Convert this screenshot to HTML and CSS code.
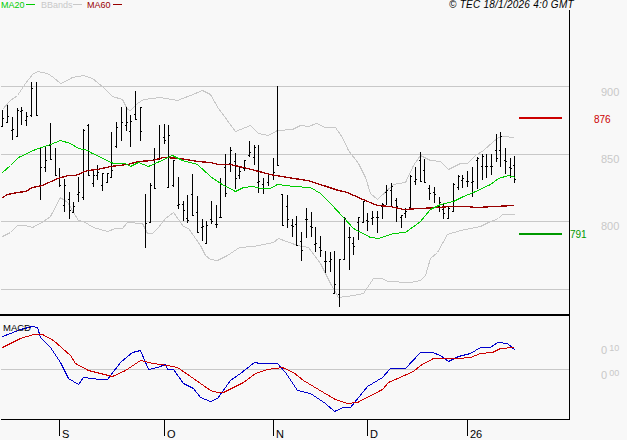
FILE: index.html
```html
<!DOCTYPE html>
<html lang="en">
<head>
<meta charset="utf-8">
<title>Chart</title>
<link rel="stylesheet" href="styles.css">
</head>
<body>
<svg class="chart" width="627" height="440" viewBox="0 0 627 440">
  <g class="px" transform="translate(0.5 0.5)">
    <path class="grid" d="M0 86H569M0 154H569M0 221H569M0 289H569M0 369H569"/>
    <path class="axis" d="M569 9V419M0 419H569M59 419V435M164 419V435M273 419V435M367 419V435M467 419V435"/>
    <path class="legend-green" d="M25 4H34"/>
    <path class="legend-gray" d="M72 4H81"/>
    <path class="legend-red" d="M112 4H121"/>
    <polyline class="band" points="2,109 10,100 17,95 25,83 32,74 37,71 47,73 53,77 60,83 65,81 72,77 83,75 92,78 103,87 112,96 122,99 127,109 130,110 137,103 143,99 160,97 177,100 190,95 202,90 210,94 218,108 235,131 250,125 258,133 268,135 277,130 292,129 300,125 308,126 316,123 325,127 335,127 342,137 348,150 358,163 365,177 370,193 377,199 393,184 405,182 413,165 420,155 430,160 440,161 448,169 460,163 467,163 475,155 483,150 492,142 498,137 503,136 514,137"/>
    <polyline class="band" points="2,236 10,232 17,225 25,225 32,227 43,221 50,216 60,197 67,202 78,220 83,221 93,227 107,231 115,228 122,228 127,222 142,223 147,233 152,233 158,227 165,218 173,212 183,226 188,228 200,245 205,255 210,259 217,260 227,255 239,247 253,246 273,242 278,238 297,245 308,247 320,263 330,283 338,297 353,295 363,293 373,278 382,278 387,281 410,282 420,280 425,275 430,258 437,252 447,234 460,230 480,226 488,222 498,218 502,214 514,214"/>
    <path class="bars" d="M2 110V126M2 126h-.6M2 118h1M7 105V122M7 122h-.6M7 116h1M12 117V139M12 130h-.6M12 129h1M17 108V136M17 136h-.6M17 110h1M21 107V124M21 111h-.6M21 110h1M26 112V125M26 120h-.6M26 116h1M31 82V116M31 115h-.6M31 88h1M36 82V115M36 115h1M40 148V199M40 167h1M45 147V171M45 167h-.6M45 160h1M50 123V158M50 145h-.6M50 159h1M55 148V174M55 175h1M59 168V186M59 178h-.6M59 185h1M64 179V211M64 205h-.6M64 185h1M69 192V218M69 199h-.6M69 210h1M73 202V212M73 212h-.6M73 206h1M78 177V201M78 194h-.6M78 192h1M83 129V199M83 197h-.6M83 130h1M88 124V174M88 125h-.6M88 175h1M93 169V186M93 183h-.6M93 175h1M97 165V179M97 175h-.6M97 172h1M102 173V190M102 185h-.6M102 173h1M107 173V182M107 182h-.6M107 173h1M111 132V176M111 177h-.6M111 170h1M116 122V147M116 146h-.6M116 127h1M121 107V140M121 122h1M126 107V130M126 125h-.6M126 122h1M130 115V146M130 131h-.6M130 121h1M135 91V119M135 114h-.6M135 119h1M140 107V140M140 107h1M140 131h1M145 194V247M145 223h1M150 183V221M150 222h-.6M150 185h1M154 148V187M154 159h-.6M154 188h1M159 125V157M159 159h-.6M159 158h1M164 124V143M164 137h-.6M164 140h1M168 125V186M168 135h1M168 187h-.6M173 160V186M173 185h-.6M173 160h1M178 177V208M178 205h-.6M178 204h1M183 201V220M183 204h-.6M183 210h1M187 195V222M187 218h-.6M187 220h1M192 174V214M192 194h-.6M192 215h1M197 196V232M197 212h-.6M197 232h1M202 219V240M202 227h-.6M202 226h1M206 221V242M206 243h-.6M206 225h1M211 201V223M211 219h-.6M211 221h1M216 205V227M216 224h-.6M216 224h1M220 178V217M220 217h-.6M220 217h1M225 154V196M225 167h-.6M225 193h1M230 147V171M230 163h-.6M230 150h1M235 153V188M235 161h-.6M235 178h1M239 167V178M239 175h-.6M239 171h1M244 160V170M244 168h-.6M244 160h1M249 141V156M249 155h-.6M249 152h1M254 145V164M254 157h-.6M254 147h1M258 145V192M258 182h-.6M258 181h1M263 178V193M263 184h-.6M263 188h1M268 173V185M268 182h-.6M268 174h1M273 158V179M273 175h-.6M273 172h1M277 86V164M277 165h1M282 194V224M282 194h-.6M282 225h1M287 195V227M287 206h-.6M287 219h1M292 219V236M292 225h-.6M292 226h1M296 216V244M296 224h-.6M296 245h1M301 232V260M301 241h-.6M301 250h1M306 208V237M306 219h-.6M306 219h1M311 212V236M311 226h-.6M311 227h1M315 227V251M315 244h-.6M315 243h1M320 236V256M320 247h-.6M320 250h1M325 251V272M325 261h-.6M325 261h1M330 252V271M330 261h-.6M330 259h1M334 251V292M334 293h-.6M334 284h1M339 259V306M339 294h-.6M339 259h1M344 217V258M344 259h-.6M344 218h1M349 227V269M349 237h-.6M349 237h1M353 237V254M353 243h-.6M353 246h1M358 217V239M358 222h-.6M358 217h1M363 201V221M363 222h-.6M363 201h1M367 213V230M367 220h-.6M367 221h1M372 211V224M372 218h-.6M372 217h1M377 211V232M377 217h-.6M377 217h1M382 203V218M382 206h-.6M382 204h1M386 185V204M386 192h-.6M386 190h1M391 183V206M391 190h-.6M391 186h1M396 198V221M396 200h-.6M396 206h1M401 215V227M401 217h-.6M401 215h1M405 208V217M405 213h-.6M405 211h1M410 175V208M410 207h-.6M410 176h1M415 167V184M415 181h-.6M415 179h1M420 152V180M420 160h-.6M420 181h1M424 159V182M424 170h-.6M424 182h1M429 185V199M429 188h-.6M429 193h1M434 187V202M434 192h-.6M434 194h1M439 197V211M439 206h-.6M439 202h1M443 203V218M443 209h-.6M443 213h1M448 207V218M448 218h-.6M448 208h1M453 183V211M453 211h-.6M453 184h1M458 175V189M458 187h-.6M458 176h1M462 175V187M462 180h-.6M462 178h1M467 171V186M467 181h-.6M467 181h1M472 167V196M472 182h-.6M472 181h1M477 157V188M477 160h-.6M477 158h1M482 154V179M482 166h-.6M482 156h1M486 154V177M486 166h-.6M486 166h1M491 154V174M491 166h-.6M491 166h1M496 134V161M496 150h-.6M496 158h1M500 132V166M500 150h-.6M500 136h1M505 148V173M505 160h-.6M505 161h1M510 158V177M510 167h-.6M510 168h1M514 156V182M514 165h-.6M514 179h1"/>
    <polyline class="ma60" points="2,197 7,194 17,192 25,191 32,187 42,185 57,178 68,175 75,175 87,170 97,169 110,166 127,164 138,161 152,160 163,157 180,158 197,161 210,162 218,164 230,164 247,168 270,174 287,177 307,180 323,185 338,190 347,192 360,198 377,205 390,206 403,209 420,208 437,207 450,206 465,206 477,207 493,206 514,205"/>
    <polyline class="ma20" points="2,172 10,165 18,157 33,150 35,149 50,144 60,140 70,143 78,148 88,150 90,152 113,163 125,163 130,166 138,162 148,166 157,162 172,155 182,160 197,164 210,176 220,183 235,191 243,187 253,186 260,188 270,188 277,184 293,186 310,187 320,193 330,203 343,217 353,228 370,237 378,238 393,233 405,232 420,221 430,209 440,204 453,201 463,196 473,192 490,184 498,178 508,175 515,177"/>
    <polyline class="macd-blue" points="2,336 10,333 20,329 32,326 37,327 40,337 50,347 60,362 68,378 78,384 83,377 100,379 107,379 120,362 132,352 140,350 148,369 157,367 165,364 167,369 173,369 183,383 193,388 200,397 210,401 217,398 230,380 240,373 254,362 260,363 277,363 285,372 297,390 310,393 325,403 334,411 343,407 350,407 367,386 382,377 390,368 405,368 420,352 432,352 440,355 448,361 458,356 470,353 480,347 490,347 497,342 507,343 515,350"/>
    <polyline class="macd-red" points="2,347 20,338 33,334 42,334 53,340 70,355 75,363 88,370 100,373 112,376 125,370 140,360 153,363 167,365 177,367 193,378 210,390 217,392 223,392 243,382 255,373 267,369 282,367 293,372 303,380 323,392 335,399 347,403 357,402 382,389 388,382 413,371 420,365 433,358 458,358 470,357 480,353 492,352 500,348 514,347"/>
  </g>
  <g class="px">
    <path class="rule" d="M0 315H570"/>
    <path class="target-red" d="M519 118H562"/>
    <path class="target-green" d="M519 234H562"/>
  </g>
  <text class="t small c-green" x="1" y="8">MA20</text>
  <text class="t small c-gray" x="41" y="8">BBands</text>
  <text class="t small c-dark" x="87" y="8">MA60</text>
  <text class="t stamp" x="449" y="8">© TEC 18/1/2026 4:0 GMT</text>
  <text class="t big c-gray" x="601" y="95.5">900</text>
  <text class="t big c-gray" x="601" y="163">850</text>
  <text class="t big c-gray" x="601" y="230">800</text>
  <text class="t c-red" x="594" y="123">876</text>
  <text class="t c-lime" x="570" y="238">791</text>
  <text class="t big c-gray" x="601" y="354">0<tspan class="sup" dx="2" dy="-3">10</tspan></text>
  <text class="t big c-gray" x="601" y="379">0<tspan class="sup" dx="2" dy="-3">00</tspan></text>
  <text class="t macd-label" x="3" y="331">MACD</text>
  <text class="t big" x="62" y="438">S</text>
  <text class="t big" x="167" y="438">O</text>
  <text class="t big" x="276" y="438">N</text>
  <text class="t big" x="370" y="438">D</text>
  <text class="t big" x="470" y="438">26</text>
</svg>
</body>
</html>
```

FILE: styles.css
```css
html, body { margin: 0; padding: 0; background: #f8f8f8; }
.chart { display: block; }
.px { shape-rendering: crispEdges; }
.px path, .px polyline { fill: none; stroke-width: 1; }
.grid { stroke: #c8c8c8; }
.axis { stroke: #000; }
.px .rule { stroke: #000; stroke-width: 2; }
.px .bars { stroke: #000; stroke-linecap: square; }
.band { stroke: #c8c8c8; }
.ma20, .legend-green { stroke: #00cc00; }
.px .ma60 { stroke: #990000; stroke-width: 1.3; }
.legend-red { stroke: #990000; }
.legend-gray { stroke: #c8c8c8; }
.macd-blue { stroke: #0000cc; }
.macd-red { stroke: #cc0000; }
.px .target-red { stroke: #cc0000; stroke-width: 2; }
.px .target-green { stroke: #009900; stroke-width: 2; }
.t { font-family: "Liberation Sans", Arial, sans-serif; font-size: 10px; fill: #000; }
.small { font-size: 9px; }
.big { font-size: 11px; }
.sup { font-size: 9px; }
.macd-label { font-size: 9.5px; }
.stamp { font-style: italic; letter-spacing: 0.25px; }
.c-green { fill: #00cc00; }
.c-gray { fill: #c8c8c8; }
.c-dark { fill: #990000; }
.c-red { fill: #cc0000; }
.c-lime { fill: #009900; }
```
